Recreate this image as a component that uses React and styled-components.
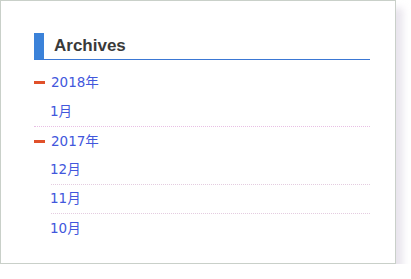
import React from 'react';
import styled, { createGlobalStyle } from 'styled-components';

const GlobalStyle = createGlobalStyle`
  html, body {
    margin: 0;
    padding: 0;
    background: #ffffff;
  }
`;

const archives = [
  { year: '2018年', months: ['1月'] },
  { year: '2017年', months: ['12月', '11月', '10月'] },
];

const App = () => (
  <>
    <GlobalStyle />
    <Card>
      <Title>Archives</Title>
      <YearList>
        {archives.map((group, i) => (
          <YearItem key={group.year} $last={i === archives.length - 1}>
            <YearRow>
              <Dash />
              <Link href="#">{group.year}</Link>
            </YearRow>
            <MonthList>
              {group.months.map((m, j) => (
                <MonthItem key={m} $last={j === group.months.length - 1}>
                  <Link href="#">{m}</Link>
                </MonthItem>
              ))}
            </MonthList>
          </YearItem>
        ))}
      </YearList>
    </Card>
  </>
);

const Card = styled.div`
  box-sizing: border-box;
  width: 396px;
  height: 264px;
  background: #ffffff;
  border: 1px solid #c9d0c9;
  box-shadow: 7px 8px 7px rgba(200, 190, 210, 0.4);
  padding: 32px 25px 0 33px;
`;

const Title = styled.h2`
  margin: 0;
  height: 26px;
  line-height: 26px;
  border-left: 10px solid #3b82d9;
  border-bottom: 1px solid #3b78d4;
  padding-left: 10px;
  font-family: 'Liberation Sans', Arial, sans-serif;
  font-size: 17px;
  font-weight: 700;
  color: #3a3a3a;
`;

const YearList = styled.ul`
  list-style: none;
  margin: 8px 0 0 0;
  padding: 0;
`;

const YearItem = styled.li`
  border-bottom: ${p => (p.$last ? 'none' : '1px dotted #e8bfe4')};
`;

const YearRow = styled.div`
  box-sizing: border-box;
  display: flex;
  align-items: center;
  height: 29px;
  padding-bottom: 3px;
`;

const Dash = styled.span`
  display: block;
  width: 11px;
  height: 3px;
  margin-top: 3px;
  background: #e0502a;
  margin-right: 7px;
`;

const MonthList = styled.ul`
  list-style: none;
  margin: 0;
  padding: 0 0 0 17px;
`;

const MonthItem = styled.li`
  box-sizing: border-box;
  display: flex;
  align-items: center;
  height: 29px;
  padding-bottom: 4px;
  border-bottom: ${p => (p.$last ? 'none' : '1px dotted #e4cce0')};
`;

const Link = styled.a`
  font-family: 'DejaVu Sans', Verdana, 'Noto Sans CJK JP', sans-serif;
  font-size: 13.5px;
  color: #4257dc;
  text-decoration: none;
  margin-left: -1px;
`;

export default App;
